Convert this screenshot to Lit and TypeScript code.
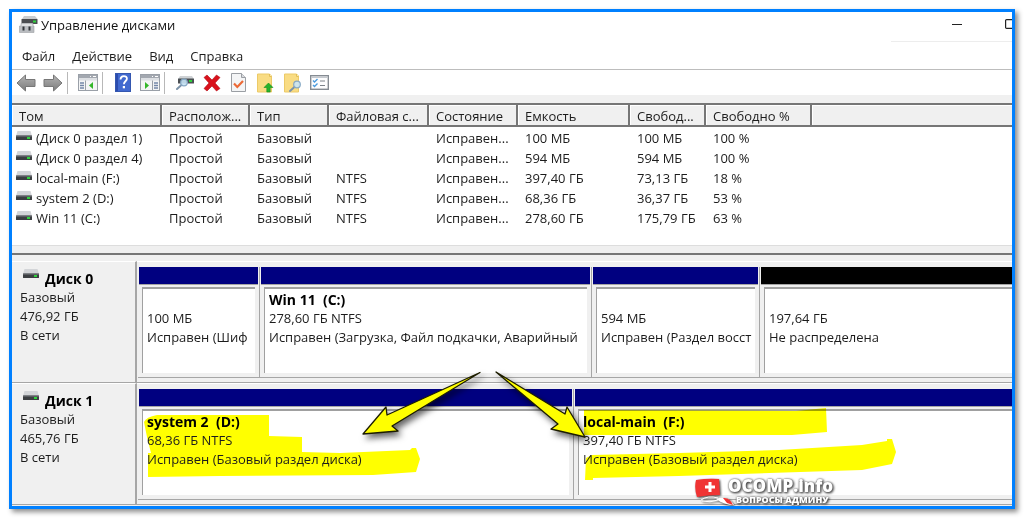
import { LitElement, html, svg, css, nothing } from "lit";
import { customElement, property } from "lit/decorators.js";

interface Volume {
  name: string;
  layout: string;
  type: string;
  fs: string;
  status: string;
  size: string;
  free: string;
  percent: string;
}

interface Partition {
  title?: string;
  size: string;
  status: string;
  weight: number;
  unallocated?: boolean;
  mark?: "d" | "f";
}

interface Disk {
  name: string;
  size: string;
  partitions: Partition[];
}

const columns = [
  ["Том", "c-name"],
  ["Располож...", "c-layout"],
  ["Тип", "c-type"],
  ["Файловая с...", "c-fs"],
  ["Состояние", "c-status"],
  ["Емкость", "c-size"],
  ["Свобод...", "c-free"],
  ["Свободно %", "c-percent"],
  ["", "c-rest"],
];

const row = (name: string, fs: string, size: string, free: string, percent: string): Volume => ({
  name, fs, size, free, percent,
  layout: "Простой",
  type: "Базовый",
  status: "Исправен...",
});

const volumes: Volume[] = [
  row("(Диск 0 раздел 1)", "", "100 МБ", "100 МБ", "100 %"),
  row("(Диск 0 раздел 4)", "", "594 МБ", "594 МБ", "100 %"),
  row("local-main (F:)", "NTFS", "397,40 ГБ", "73,13 ГБ", "18 %"),
  row("system 2 (D:)", "NTFS", "68,36 ГБ", "36,37 ГБ", "53 %"),
  row("Win 11 (C:)", "NTFS", "278,60 ГБ", "175,79 ГБ", "63 %"),
];

const disks: Disk[] = [
  {
    name: "Диск 0",
    size: "476,92 ГБ",
    partitions: [
      { size: "100 МБ", status: "Исправен (Шиф", weight: 122 },
      { title: "Win 11  (C:)", size: "278,60 ГБ NTFS", status: "Исправен (Загрузка, Файл подкачки, Аварийный", weight: 332 },
      { size: "594 МБ", status: "Исправен (Раздел восст", weight: 168 },
      { size: "197,64 ГБ", status: "Не распределена", weight: 252, unallocated: true },
    ],
  },
  {
    name: "Диск 1",
    size: "465,76 ГБ",
    partitions: [
      { title: "system 2  (D:)", size: "68,36 ГБ NTFS", status: "Исправен (Базовый раздел диска)", weight: 436, mark: "d" },
      { title: "local-main  (F:)", size: "397,40 ГБ NTFS", status: "Исправен (Базовый раздел диска)", weight: 438, mark: "f" },
    ],
  },
];

const driveIcon = html`
  <svg class="drive" width="16" height="10" viewBox="0 0 16 10" aria-hidden="true">
    <path d="M1.500 0h13l1.500 5H0z" fill="#d3d5d8" />
    <rect y="4.500" width="16" height="4.500" rx=".6" fill="#3c3f42" />
    <rect y="4.500" width="16" height="1" fill="#777a7e" />
    <rect x="11" y="6" width="3" height="2" fill="#2fd23c" />
  </svg>`;

const appIcon = html`
  <svg width="19" height="17" viewBox="0 0 19 17" aria-hidden="true">
    <path d="M5 0h11l2.500 3H3z" fill="#c9cccf" />
    <rect x="2.500" y="3" width="16" height="5" rx=".5" fill="#4a4d50" />
    <rect x="14" y="4.500" width="3" height="2" fill="#2fd23c" />
    <path d="M2 7.500h12v2.500h1v6.500H.5v-6.500H2z" fill="#b9bcc0" stroke="#9da1a5" stroke-width=".6" />
    <path d="M2.500 7.500h11V10h-11z" fill="#dfe1e3" />
    <rect x="3.500" y="10.500" width="2" height="4" fill="#33363a" />
    <rect x="9.500" y="10.500" width="2" height="4" fill="#33363a" />
  </svg>`;

const arrowShape = (flip: boolean) => html`
  <svg width="20" height="20" viewBox="0 0 20 20" aria-hidden="true">
    <defs>
      <linearGradient id="g" x1="0" y1="0" x2="0" y2="1">
        <stop offset="0" stop-color="#b4b4b4" />
        <stop offset="1" stop-color="#7c7c7c" />
      </linearGradient>
    </defs>
    <path d="M1 10L9.500 2v4.500H19v7H9.500V18z" fill="url(#g)" stroke="#777" stroke-linejoin="round"
      transform=${flip ? "translate(20 0) scale(-1 1)" : "translate(0 0)"} />
  </svg>`;

const paneIcon = (right: boolean) => html`
  <svg width="20" height="17" viewBox="0 0 20 17" aria-hidden="true">
    <rect x=".5" y=".5" width="19" height="16" fill="#f4f5f6" stroke="#9aa0a8" />
    <rect x="1" y="1" width="18" height="3" fill="#a3a8b0" />
    <path d="M15 2.500h3M12 2.500h1" stroke="#fff" />
    <rect x="1" y="4" width="18" height="2.500" fill="#dcdfe3" />
    <path d=${right ? "M12.500 6.500v10" : "M7.500 6.500v10"} stroke="#9aa0a8" />
    <path d=${right ? "M14 9h4M14 11.500h4M14 14h4" : "M2 9h4M2 11.500h4M2 14h4"} stroke="#7387a8" stroke-width="1.300" />
    <path d=${right ? "M5 8l4 3.500L5 15z" : "M15 8l-4 3.500 4 3.500z"} fill="#35b72b" />
  </svg>`;

const helpIcon = html`
  <svg width="16" height="19" viewBox="0 0 16 19" aria-hidden="true">
    <rect x=".5" y=".5" width="15" height="18" fill="#4169cf" stroke="#3457b0" />
    <rect x="1" y="1" width="2" height="17" fill="#2c4cae" />
    <path d="M5.500 6.500c0-4.600 6.800-4.300 6.400-.6-.3 2.400-3 2.500-3 5.300" fill="none" stroke="#fff" stroke-width="1.800" />
    <rect x="7.800" y="13" width="2.200" height="2.300" fill="#fff" />
  </svg>`;

const lens = svg`<path d="M0 14l5-4.500" stroke="#7d93a8" stroke-width="2" stroke-linecap="round" />
  <circle cx="7" cy="7.500" r="3.300" fill="#c9e4f6" fill-opacity=".9" stroke="#86a8c4" stroke-width="1.200" />`;

const scanIcon = html`
  <svg width="18" height="17" viewBox="0 0 18 17" aria-hidden="true">
    <path d="M4 2h12l2 3H2z" fill="#cfd2d5" />
    <rect x="2" y="4.500" width="16" height="5" rx=".5" fill="#4b4f53" />
    <rect x="13" y="6" width="3" height="2" fill="#2fd23c" />
    <g transform="translate(1 1)">${lens}</g>
  </svg>`;

const deleteIcon = html`
  <svg width="18" height="18" viewBox="0 0 18 18" aria-hidden="true">
    <path d="M1 3.500L4 1l5 5 4.500-5L17 3.500 12 9l5 5.500-3.500 2.500L9 12l-5 5-3-2.500L6 9z" fill="#d9121c" stroke="#b50c15" stroke-width=".6" />
  </svg>`;

const checkIcon = html`
  <svg width="15" height="19" viewBox="0 0 15 19" aria-hidden="true">
    <path d="M.5.500h10l4 4v14H.5z" fill="#f4f5f6" stroke="#9b9fa4" />
    <path d="M10.500.500v4h4" fill="#d9dbde" stroke="#9b9fa4" />
    <path d="M3 10.500l3.300 3.500L12 8" fill="none" stroke="#ec6a37" stroke-width="2.200" />
  </svg>`;

const folder = svg`<path d="M.5 1h12l2 2v16H.5z" fill="#f9dc83" stroke="#ecca68" />
  <path d="M12.500 1v2.500h2" fill="#fff2c4" stroke="#e3bf57" />`;

const upIcon = html`
  <svg width="18" height="20" viewBox="0 0 18 20" aria-hidden="true">
    ${folder}
    <path d="M11.500 10l4.500 4.500h-2.800V19H9.800v-4.500H7z" fill="#27b32a" stroke="#148f1b" stroke-width=".6" />
  </svg>`;

const findIcon = html`
  <svg width="18" height="20" viewBox="0 0 18 20" aria-hidden="true">
    ${folder}
    <g transform="translate(6 4)">${lens}</g>
  </svg>`;

const listIcon = html`
  <svg width="19" height="15" viewBox="0 0 19 15" aria-hidden="true">
    <rect x=".7" y=".7" width="17.600" height="13.600" fill="#fdfdfe" stroke="#858b92" stroke-width="1.400" />
    <rect x="1.400" y="1.400" width="16.200" height="1.600" fill="#c5c9ce" />
    <path d="M3 5.500l1.500 1.500L7.500 4M3 10l1.500 1.500L7.500 8.500" fill="none" stroke="#4b9bdd" stroke-width="1.400" />
    <path d="M10 6h5M10 10.500h5" stroke="#7c8289" />
  </svg>`;

const tools: Array<[string, unknown] | null> = [
  ["Назад", arrowShape(false)],
  ["Вперед", arrowShape(true)],
  null,
  ["Дерево консоли", paneIcon(false)],
  null,
  ["Справка", helpIcon],
  ["Панель действий", paneIcon(true)],
  null,
  ["Повторить проверку дисков", scanIcon],
  ["Удалить", deleteIcon],
  ["Свойства", checkIcon],
  ["Открыть", upIcon],
  ["Проводник", findIcon],
  ["Параметры", listIcon],
];

/* Highlighter strokes, drawn around a partition's text. */
const marks = {
  d: html`
    <svg class="mark" width="290" height="76" viewBox="143 406 290 76" aria-hidden="true">
      <path d="M144 420Q146 415 157 413L269 413V434L302 435V450L340 451L410 448 412 446H416L420 457 416 470 373 473 220 474 148 475V451H151L147 435Z" />
    </svg>`,
  f: html`
    <svg class="mark" width="330" height="76" viewBox="580 406 330 76" aria-hidden="true">
      <path d="M585 408L797 409 827 406 828 430 793 433H585Z" />
      <path d="M587 456L593 453 680 451 780 448 863 443 888 439V437H893L897 450 893 462 863 468 680 474 594 476V478H586Z" />
    </svg>`,
};

@customElement("disk-row")
class DiskRow extends LitElement {
  @property({ attribute: false }) disk!: Disk;

  static styles = css`
    :host { display: grid; grid-template-columns: 125px minmax(0, 1fr); grid-template-rows: 122px; }
    .label {
      box-sizing: border-box;
      padding: 7px 8px 0;
      border: 1px solid #a6a6a6;
      border-width: 0 2px 1px 0;
      border-top: 1px solid #fff;
      line-height: 19px;
      background: #f0f0f0;
    }
    .name { display: flex; align-items: flex-start; gap: 6px; margin: 0; font-size: 14px; font-weight: 700; color: #000; }
    .drive { display: block; margin: 0 0 0 3px; }
    .bars { display: grid; box-sizing: border-box; padding: 5px 0 4px 1px; border-bottom: 1px solid #a6a6a6; border-top: 1px solid #fff; }
    .part {
      display: flex; flex-direction: column; box-sizing: border-box; min-width: 0;
      border-right: 1px solid #a6a6a6; border-bottom: 1px solid #a6a6a6; padding-right: 1px;
    }
    .part:last-child { border-right: 0; padding-right: 0; }
    .stripe { height: 17px; background: #000080; border-bottom: 1px solid #a6a6a6; margin-left: 1px; }
    .free .stripe { background: #000; }
    .box {
      position: relative;
      flex: 1;
      margin: 2px 3px 4px 4px;
      padding: 1px 3px 0 4px;
      border: 1px solid #a0a0a0;
      border-width: 2px 0 0 1px;
      background: #fff;
      line-height: 19px;
    }
    .part:last-child .box { margin-right: 0; }
    .line { position: relative; height: 19px; overflow: hidden; white-space: pre; }
    .title { font-size: 14px; font-weight: 700; color: #000; }
    .mark { position: absolute; top: -3px; left: 0; mix-blend-mode: multiply; fill: #ffff00; }
  `;

  render() {
    const { name, size, partitions } = this.disk;
    const template = partitions.map((p) => `minmax(0, ${p.weight}fr)`).join(" ");
    return html`
      <div class="label">
        <h2 class="name">${driveIcon}<span class="caption">${name}</span></h2>
        <div>Базовый</div>
        <div>${size}</div>
        <div>В сети</div>
      </div>
      <div class="bars" style="grid-template-columns: ${template}">
        ${partitions.map((p) => html`
          <section class="part ${p.unallocated ? "free" : ""}">
            <div class="stripe"></div>
            <div class="box">
              ${p.mark ? marks[p.mark] : nothing}
              <div class="line title">${p.title ?? ""}</div>
              <div class="line">${p.size}</div>
              <div class="line">${p.status}</div>
            </div>
          </section>`)}
      </div>`;
  }
}

@customElement("app-root")
class AppRoot extends LitElement {
  static styles = css`
    :host {
      display: block;
      box-sizing: border-box;
      padding: 9px;
      background: #fff;
      color: #1c1c1c;
      font: 13px/20px "Open Sans", "Noto Sans", sans-serif;
    }
    button { font: inherit; color: inherit; padding: 0; border: 0; background: none; }
    .window {
      position: relative;
      overflow: hidden;
      border: 3px solid #0080ff;
      background: #fff;
      box-shadow: 3px 3px 5px rgba(0, 0, 0, 0.45);
    }
    .titlebar { display: flex; align-items: flex-start; height: 30px; padding-left: 7px; box-sizing: border-box; }
    .titlebar > svg { margin-top: 4px; }
    .titlebar h1 { flex: 1; margin: 0 0 0 3px; font-size: 13px; font-weight: 400; line-height: 26px; color: #111; }
    .controls { display: flex; margin-right: -24px; align-self: stretch; border-bottom: 1px solid #ededed; padding-left: 39px; }
    .controls button { display: grid; place-items: center; width: 53px; height: 24px; }
    .menu { display: flex; gap: 17px; padding: 4px 10px 3px; }
    .toolbar { display: flex; align-items: center; height: 25px; border-top: 1px solid #bdbdbd; }
    .toolbar button { display: grid; place-items: center; width: 27px; height: 24px; }
    .sep { width: 1px; height: 22px; margin: 0 6px 0 1px; background: #b8b8b8; }
    .list { border-top: 8px solid #f0f0f0; height: 150px; box-sizing: border-box; }
    table { width: 100%; table-layout: fixed; border-collapse: separate; border-spacing: 0; }
    th {
      box-sizing: border-box;
      height: 24px; padding: 3px 0 0 7px;
      border: 1px solid #767676; border-width: 2px 2px 2px 0;
      background: #f0f0f0;
      box-shadow: inset 1px 1px 0 #fff;
      font-weight: 400; text-align: left; line-height: 17px; white-space: nowrap; overflow: hidden;
    }
    th:last-child { border-right: 0; }
    td { height: 20px; padding: 0 0 0 7px; white-space: nowrap; overflow: hidden; line-height: 20px; }
    td:first-child { padding-left: 4px; }
    tbody::before { content: ""; display: block; height: 1px; }
    .vol { display: flex; gap: 4px; }
    .drive { display: block; flex: none; margin-top: 3px; }
    .c-name { width: 150px; }
    .c-layout { width: 88px; }
    .c-type { width: 79px; }
    .c-fs { width: 100px; }
    .c-status { width: 89px; }
    .c-size { width: 112px; }
    .c-free { width: 76px; }
    .c-percent { width: 106px; }
    .splitter { height: 7px; background: #efefef; border-top: 1px solid #ddd; border-bottom: 2px solid #767676; }
    .map { position: relative; padding: 6px 0 1px; background: #f0f0f0; }
    .arrows { position: absolute; left: 338px; top: 104px; overflow: visible; filter: drop-shadow(3px 4px 3px rgba(0, 0, 0, 0.6)); }
    .logo {
      position: absolute; right: 179px; bottom: 0;
      display: flex; color: #fff;
      filter: drop-shadow(1px 1px 1px rgba(0, 0, 0, 0.75));
    }
    .logo p { margin: 0 0 0 -6px; font-weight: 800; font-size: 17px; line-height: 16px; text-shadow: 0 0 2px #555; }
    .logo small { display: block; padding-left: 8px; font-size: 9px; line-height: 12px; }
  `;

  render() {
    return html`
      <main class="window">
        <header class="titlebar">
          ${appIcon}
          <h1>Управление дисками</h1>
          <div class="controls">
            <button aria-label="Свернуть">
              <svg width="10" height="10" viewBox="0 0 10 10"><path d="M0 5.500h10" stroke="#222" /></svg>
            </button>
            <button aria-label="Развернуть">
              <svg width="10" height="10" viewBox="0 0 10 10"><rect x=".6" y=".6" width="8.800" height="8.800" rx="1" fill="none" stroke="#222" stroke-width="1.200" /></svg>
            </button>
          </div>
        </header>
        <nav class="menu">
          ${["Файл", "Действие", "Вид", "Справка"].map((m) => html`<button>${m}</button>`)}
        </nav>
        <div class="toolbar">
          ${tools.map((t) => (t ? html`<button aria-label=${t[0]}>${t[1]}</button>` : html`<span class="sep"></span>`))}
        </div>
        <div class="list">
          <table>
            <thead>
              <tr>${columns.map(([label, cls]) => html`<th class=${cls}>${label}</th>`)}</tr>
            </thead>
            <tbody>
              ${volumes.map((v) => html`
                <tr>
                  <td><span class="vol">${driveIcon}${v.name}</span></td>
                  <td>${v.layout}</td>
                  <td>${v.type}</td>
                  <td>${v.fs}</td>
                  <td>${v.status}</td>
                  <td>${v.size}</td>
                  <td>${v.free}</td>
                  <td>${v.percent}</td>
                  <td></td>
                </tr>`)}
            </tbody>
          </table>
        </div>
        <div class="splitter"></div>
        <div class="map">
          ${disks.map((d) => html`<disk-row .disk=${d}></disk-row>`)}
          <svg class="arrows" width="250" height="84" viewBox="350 358 250 84" aria-hidden="true">
            <g fill="#ffff00" stroke="#1c1c00" stroke-width="1.300" stroke-linejoin="round">
              <path d="M363 433L386 406 387 414 480 371.500 392 425 398 430Z" />
              <path d="M585 436L567 406 565 413 496 371 558 423 551 428Z" />
            </g>
          </svg>
          <div class="logo">
            <svg width="40" height="28" viewBox="0 0 40 28" aria-hidden="true">
              <path d="M2 2Q14 0 25 1l1 16Q14 17 3 19Q0 10 2 2z" fill="#f03434" />
              <path d="M16 4v10M11 9h10" stroke="#fff" stroke-width="3" />
              <path d="M7 22Q14 17 24 20M8 23Q16 25 24 22" fill="none" stroke="#fff" />
              <path d="M22 21Q34 17 40 27Q30 27 22 21z" fill="#fff" />
              <path d="M29 20Q36 19 39 27L33 25z" fill="#f03434" />
            </svg>
            <p>OCOMP.info<small>ВОПРОСЫ АДМИНУ</small></p>
          </div>
        </div>
      </main>`;
  }
}
